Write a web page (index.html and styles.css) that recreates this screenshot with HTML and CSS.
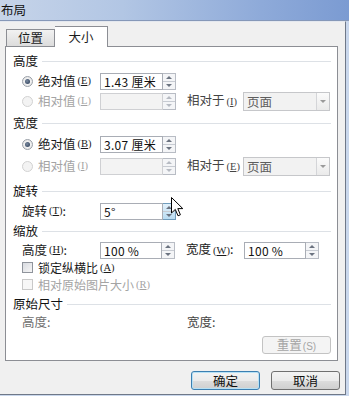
FILE: index.html
```html
<!DOCTYPE html>
<html lang="zh-CN">
<head>
  <meta charset="UTF-8">
  <title>布局</title>
  <link rel="stylesheet" href="styles.css">
</head>
<body>
  <div class="window">
    <div class="titlebar">布局</div>
    <div class="client">
      <div class="tabs">
        <div class="tab">位置</div>
        <div class="tab active">大小</div>
      </div>

      <div class="panel">
        <div class="group-title"><span>高度</span></div>
        <div class="row">
          <div class="opt"><span class="radio checked"></span>绝对值<span class="key">(<u>E</u>)</span></div>
          <div class="spin">
            <span class="field">1.43 厘米</span>
            <span class="arrows"><i class="up"></i><i class="down"></i></span>
          </div>
        </div>
        <div class="row">
          <div class="opt disabled"><span class="radio"></span>相对值<span class="key">(<u>L</u>)</span></div>
          <div class="spin off">
            <span class="field"></span>
            <span class="arrows"><i class="up"></i><i class="down"></i></span>
          </div>
          <div class="rel">相对于<span class="key">(<u>I</u>)</span></div>
          <div class="select"><span class="val">页面</span><span class="drop"></span></div>
        </div>

        <div class="group-title g2"><span>宽度</span></div>
        <div class="row r3">
          <div class="opt"><span class="radio checked"></span>绝对值<span class="key">(<u>B</u>)</span></div>
          <div class="spin">
            <span class="field">3.07 厘米</span>
            <span class="arrows"><i class="up"></i><i class="down"></i></span>
          </div>
        </div>
        <div class="row r4">
          <div class="opt disabled"><span class="radio"></span>相对值<span class="key">(<u>I</u>)</span></div>
          <div class="spin off">
            <span class="field"></span>
            <span class="arrows"><i class="up"></i><i class="down"></i></span>
          </div>
          <div class="rel">相对于<span class="key">(<u>E</u>)</span></div>
          <div class="select"><span class="val">页面</span><span class="drop"></span></div>
        </div>

        <div class="group-title g3"><span>旋转</span></div>
        <div class="row">
          <div class="opt">旋转<span class="key">(<u>T</u>)</span>:</div>
          <div class="spin">
            <span class="field">5°</span>
            <span class="arrows hover"><i class="up"></i><i class="down"></i></span>
          </div>
        </div>

        <div class="group-title"><span>缩放</span></div>
        <div class="row r6">
          <div class="opt">高度<span class="key">(<u>H</u>)</span>:</div>
          <div class="spin">
            <span class="field">100 %</span>
            <span class="arrows"><i class="up"></i><i class="down"></i></span>
          </div>
          <div class="rel">宽度<span class="key">(<u>W</u>)</span>:</div>
          <div class="spin">
            <span class="field">100 %</span>
            <span class="arrows"><i class="up"></i><i class="down"></i></span>
          </div>
        </div>
        <div class="check-row"><span class="box"></span>锁定纵横比<span class="key">(<u>A</u>)</span></div>
        <div class="check-row disabled"><span class="box"></span>相对原始图片大小<span class="key">(<u>R</u>)</span></div>

        <div class="group-title g5"><span>原始尺寸</span></div>
        <div class="row r7">
          <div class="opt muted">高度:</div>
          <div class="gap"></div>
          <div class="rel muted">宽度:</div>
        </div>
        <div class="reset-row">
          <div class="btn small">重置<span class="key">(S)</span></div>
        </div>
      </div>

      <div class="buttons">
        <div class="btn default">确定</div>
        <div class="btn">取消</div>
      </div>
    </div>

    <svg class="cursor" width="13" height="20" viewBox="0 0 13 20">
      <path d="M0.5 0.5 L0.5 16 L4.3 12.4 L7 18.8 L9.4 17.8 L6.8 11.6 L11.8 11.6 Z" fill="#fff" stroke="#000" stroke-width="1"/>
    </svg>
  </div>
</body>
</html>
```

FILE: styles.css
```css
html,
body {
  margin: 0;
  padding: 0;
  background: #f0f0f0;
  font-family: "Noto Sans CJK SC", "Liberation Sans", sans-serif;
  font-size: 12.5px;
  line-height: 16px;
  color: #1b1b1b;
}

.window {
  width: 349px;
  height: 396px;
  position: relative;
  overflow: hidden;
  display: flex;
  flex-direction: column;
  background: #c9d7ec;
}

.titlebar {
  height: 20px;
  flex: none;
  line-height: 19px;
  padding-left: 1px;
  background: linear-gradient(to right, #c6d4e9 0%, #b2c6e4 35%, #8eaad9 75%, #7b9bd2 100%);
  border-bottom: 1px solid #8698b8;
  color: #111;
}

.client {
  width: 346px;
  height: 374px;
  box-sizing: border-box;
  flex: none;
  display: flex;
  flex-direction: column;
  padding: 4px 7px 0 5px;
  background: #f0f0f0;
  border-top: 1px solid #e4e8ef;
  border-right: 1px solid #6f7888;
  border-bottom: 1px solid #6f7888;
}

/* tabs */

.tabs {
  display: flex;
  align-items: flex-end;
  height: 21px;
  position: relative;
  z-index: 2;
}

.tab {
  box-sizing: border-box;
  width: 49px;
  height: 17px;
  margin: 0 0 1px 1px;
  border: 1px solid #8c8e94;
  border-bottom: none;
  background: linear-gradient(#f2f2f2, #dcdcdc);
  text-align: center;
  line-height: 16px;
}

.tab.active {
  width: 53px;
  height: 21px;
  margin: 0;
  background: #fff;
  border-left: none;
  line-height: 20px;
}

.panel {
  box-sizing: border-box;
  width: 333px;
  height: 315px;
  margin-top: -1px;
  padding-top: 4px;
  background: #fff;
  border: 1px solid #8c8e94;
}

/* groups and rows */

.group-title {
  display: flex;
  align-items: center;
  gap: 4px;
  height: 20px;
  padding: 0 6px 0 7px;
  color: #111;
}

.group-title::after {
  content: '';
  flex: 1;
  height: 1px;
  background: #dde1e6;
}

.g2 { margin-top: 2px; }
.g3 { margin-top: 5px; }
.g5 { margin-top: 1px; }

.row {
  display: flex;
  align-items: center;
  height: 20px;
  padding-left: 16px;
}

.r3 { margin-top: 1px; }
.r4 { margin-top: 2px; }
.r6 { height: 18px; }
.r7 { height: 16px; }

.opt {
  width: 78px;
  display: flex;
  align-items: center;
  white-space: nowrap;
}

.opt.disabled,
.check-row.disabled {
  color: #a4a4a4;
}

.muted {
  color: #6e6e6e;
}

.key {
  font-family: "Liberation Serif", serif;
  font-size: 10.5px;
  margin-left: 2px;
}

.key u {
  text-decoration-thickness: 1px;
}

.radio {
  width: 11px;
  height: 11px;
  margin-right: 5px;
  box-sizing: border-box;
  border-radius: 50%;
  border: 1px solid #9aa0a8;
  background: radial-gradient(circle, #f4f4f4 40%, #dcdcdc 100%);
  position: relative;
}

.radio.checked::after {
  content: '';
  position: absolute;
  left: 2px;
  top: 2px;
  width: 5px;
  height: 5px;
  border-radius: 50%;
  background: radial-gradient(circle at 40% 40%, #7a8aa0, #243650);
}

.opt.disabled .radio {
  border-color: #d2d2d2;
  background: #f3f3f3;
}

/* spin boxes */

.spin {
  display: flex;
  width: 76px;
  height: 17px;
  box-sizing: border-box;
}

.field {
  flex: 1;
  box-sizing: border-box;
  border: 1px solid #a9adb5;
  padding-left: 3px;
  font-size: 12px;
  letter-spacing: 0.3px;
  line-height: 15px;
  color: #111;
  white-space: nowrap;
  overflow: hidden;
}

.field:empty {
  background: #f3f3f3;
  border-color: #cfd0d3;
}

.arrows {
  width: 13px;
  display: flex;
  flex-direction: column;
  box-sizing: border-box;
  border: 1px solid #b8bcc4;
  border-left: none;
  background: #f4f5f7;
}

.arrows i {
  flex: 1;
  display: flex;
  align-items: center;
  justify-content: center;
}

.arrows i.up {
  border-bottom: 1px solid #c7cbd2;
}

.arrows i.up::after {
  content: '';
  border: 3px solid transparent;
  border-top: none;
  border-bottom: 3px solid #6b7380;
}

.arrows i.down::after {
  content: '';
  border: 3px solid transparent;
  border-bottom: none;
  border-top: 3px solid #6b7380;
}

.spin.off .arrows i::after {
  opacity: 0.45;
}

.arrows.hover {
  background: linear-gradient(#e2f1fb, #b9dcf2);
  border-color: #6f9cbc;
}

/* second column */

.rel {
  width: 56px;
  margin-left: 11px;
  color: #444;
  white-space: nowrap;
}

.r6 .rel {
  width: 58px;
  color: #1b1b1b;
}

.r6 .spin {
  width: 75px;
}

.gap {
  width: 76px;
}

.select {
  width: 87px;
  height: 19px;
  box-sizing: border-box;
  display: flex;
  border: 1px solid #c6c7ca;
  background: #f2f2f2;
}

.select .val {
  flex: 1;
  padding-left: 3px;
  line-height: 17px;
  color: #5d5d5d;
}

.select .drop {
  width: 12px;
  border-left: 1px solid #d4d5d8;
  background: linear-gradient(#fbfbfb, #eaeaea);
  display: flex;
  align-items: center;
  justify-content: center;
}

.select .drop::after {
  content: '';
  border: 3px solid transparent;
  border-bottom: none;
  border-top: 3px solid #9a9a9a;
}

/* check boxes */

.check-row {
  display: flex;
  align-items: center;
  height: 17px;
  padding-left: 16px;
  font-size: 12px;
  line-height: 15px;
}

.box {
  width: 11px;
  height: 11px;
  box-sizing: border-box;
  margin-right: 5px;
  border: 1px solid #8f949c;
  background: linear-gradient(135deg, #d8dbe0, #f6f6f6);
}

.check-row.disabled .box {
  border-color: #c9c9c9;
  background: #f7f7f7;
}

/* buttons */

.reset-row {
  display: flex;
  justify-content: flex-end;
  padding-right: 6px;
  margin-top: 6px;
}

.btn {
  box-sizing: border-box;
  width: 69px;
  height: 19px;
  border: 1px solid #707070;
  border-radius: 3px;
  background: linear-gradient(#f3f3f3 0%, #ebebeb 50%, #dddddd 51%, #cfcfcf 100%);
  text-align: center;
  line-height: 17px;
  color: #111;
}

.btn.small {
  height: 18px;
  line-height: 16px;
  border-color: #c3c3c3;
  background: #f4f4f4;
  color: #a5a5a5;
}

.btn.small .key {
  font-family: "Liberation Sans", sans-serif;
  font-size: 10px;
  margin-left: 1px;
}

.btn.default {
  border-color: #3c7fb1;
  box-shadow: inset 0 0 0 1px #b7e1f5;
}

.buttons {
  display: flex;
  justify-content: flex-end;
  gap: 11px;
  margin: 10px -2px 0 0;
}

/* mouse pointer over the rotation spinner */

.cursor {
  position: absolute;
  left: 171px;
  top: 197px;
}
```
